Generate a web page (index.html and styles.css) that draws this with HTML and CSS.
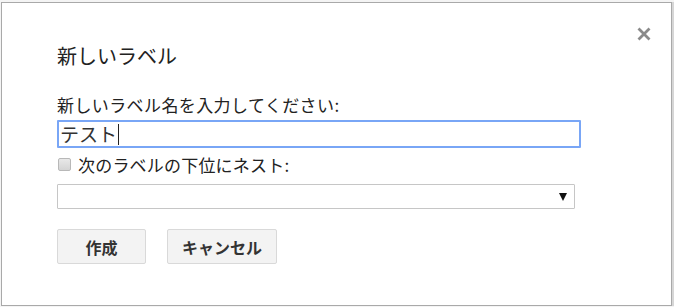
FILE: index.html
```html
<!DOCTYPE html>
<html lang="ja">
<head>
<meta charset="utf-8">
<link rel="stylesheet" href="styles.css">
</head>
<body>
<div class="dialog">
  <button class="close" aria-label="閉じる">
    <svg width="14" height="14" viewBox="0 0 14 14"><path d="M1.5 1.5L12.5 12.5M12.5 1.5L1.5 12.5" stroke="#8a8a8a" stroke-width="2.8" stroke-linecap="butt"/></svg>
  </button>
  <div class="title">新しいラベル</div>
  <div class="label">新しいラベル名を入力してください:</div>
  <div class="input">テスト<span class="caret"></span></div>
  <label class="nest"><span class="box"></span>次のラベルの下位にネスト:</label>
  <div class="select"><span class="arrow"></span></div>
  <div class="buttons">
    <button class="btn create">作成</button>
    <button class="btn cancel">キャンセル</button>
  </div>
</div>
</body>
</html>
```
FILE: styles.css
```css
html, body {
  margin: 0;
  padding: 0;
  background: #f4f4f4;
}
body {
  font-family: "Noto Sans CJK JP", "Noto Sans", sans-serif;
  color: #222;
}
.dialog {
  position: relative;
  box-sizing: border-box;
  width: 671px;
  height: 304px;
  margin: 2px 0 0 1px;
  background: #fff;
  border: 1px solid #a9a9a9;
  box-shadow: 1px 1px 0 1px #d6d6d6;
  padding: 38px 0 0 55px;
}
.close {
  position: absolute;
  top: 24px;
  right: 20px;
  width: 14px;
  height: 14px;
  padding: 0;
  border: 0;
  background: none;
  display: flex;
}
.title {
  font-size: 20px;
  line-height: 30px;
  height: 30px;
  color: #222;
}
.label {
  margin-top: 22px;
  font-size: 17px;
  letter-spacing: 0.4px;
  line-height: 24px;
  color: #222;
}
.input {
  box-sizing: border-box;
  margin-top: 3px;
  width: 524px;
  height: 28px;
  border: 2px solid #79a6f6;
  border-radius: 1px;
  padding: 0 0 0 1px;
  font-size: 19px;
  line-height: 24px;
  color: #333;
  display: flex;
  align-items: center;
}
.caret {
  display: inline-block;
  width: 1px;
  height: 21px;
  background: #222;
  margin-left: 1px;
}
.nest {
  display: flex;
  align-items: center;
  margin-top: 3px;
  height: 26px;
  font-size: 17px;
  letter-spacing: 0.2px;
  color: #222;
}
.box {
  box-sizing: border-box;
  width: 13px;
  height: 13px;
  border: 1px solid #b8b8b8;
  border-radius: 2px;
  background: linear-gradient(#e8e8e8, #d4d4d4);
  margin: 0 7px 0 1px;
}
.select {
  box-sizing: border-box;
  margin-top: 7px;
  width: 518px;
  height: 25px;
  border: 1px solid #c6c6c6;
  border-radius: 1px;
  display: flex;
  align-items: center;
  justify-content: flex-end;
  padding-right: 7px;
}
.arrow {
  width: 0;
  height: 0;
  border-left: 4px solid transparent;
  border-right: 4px solid transparent;
  border-top: 8px solid #111;
}
.buttons {
  display: flex;
  gap: 21px;
  margin-top: 20px;
}
.btn {
  box-sizing: border-box;
  height: 35px;
  background: #f3f3f3;
  border: 1px solid #d9d9d9;
  border-radius: 2px;
  font-family: "Noto Sans CJK JP", "Noto Sans", sans-serif;
  font-weight: bold;
  font-size: 16px;
  color: #333;
  padding: 0;
}
.create { width: 89px; }
.cancel { width: 110px; }
```
